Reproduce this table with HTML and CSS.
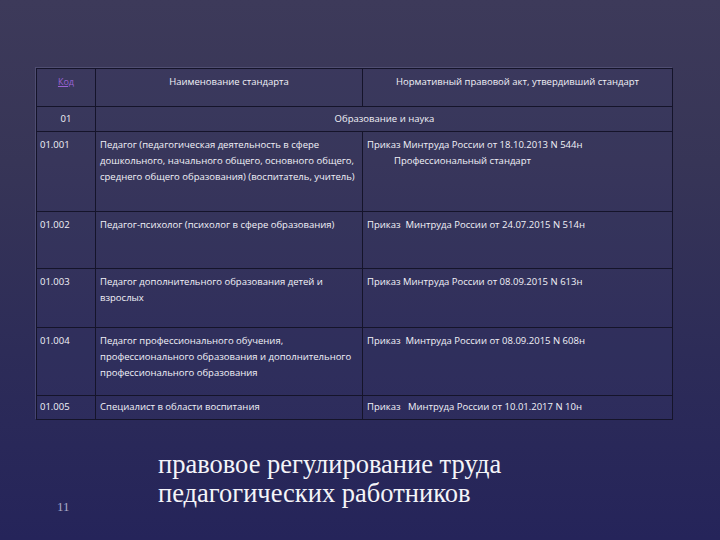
FILE: index.html
```html
<!DOCTYPE html>
<html lang="ru">
<head>
<meta charset="utf-8">
<link rel="stylesheet" href="styles.css">
</head>
<body>
<div class="slide">
  <table class="std">
    <colgroup><col class="c1"><col class="c2"><col class="c3"></colgroup>
    <tr class="r-head">
      <th><a class="code-link" href="#">Код</a></th>
      <th>Наименование стандарта</th>
      <th>Нормативный правовой акт, утвердивший стандарт</th>
    </tr>
    <tr class="r-group">
      <td class="center">01</td>
      <td colspan="2" class="center">Образование и наука</td>
    </tr>
    <tr class="r1">
      <td>01.001</td>
      <td>Педагог (педагогическая деятельность в сфере дошкольного, начального общего, основного общего, среднего общего образования) (воспитатель, учитель)</td>
      <td>Приказ Минтруда России от 18.10.2013 N 544н<br><span class="indent">Профессиональный стандарт</span></td>
    </tr>
    <tr class="r2">
      <td>01.002</td>
      <td>Педагог-психолог (психолог в сфере образования)</td>
      <td>Приказ&nbsp; Минтруда России от 24.07.2015 N 514н</td>
    </tr>
    <tr class="r3">
      <td>01.003</td>
      <td>Педагог дополнительного образования детей и взрослых</td>
      <td>Приказ Минтруда России от 08.09.2015 N 613н</td>
    </tr>
    <tr class="r4">
      <td>01.004</td>
      <td>Педагог профессионального обучения, профессионального образования и дополнительного профессионального образования</td>
      <td>Приказ&nbsp; Минтруда России от 08.09.2015 N 608н</td>
    </tr>
    <tr class="r5">
      <td>01.005</td>
      <td>Специалист в области воспитания</td>
      <td>Приказ&nbsp;&nbsp; Минтруда России от 10.01.2017 N 10н</td>
    </tr>
  </table>
  <div class="footer">
    <div class="pagenum">11</div>
    <h1 class="title">правовое регулирование труда<br>педагогических работников</h1>
  </div>
</div>
</body>
</html>
```
FILE: styles.css
```css
html, body {
  margin: 0;
  padding: 0;
}
body {
  width: 720px;
  height: 540px;
  overflow: hidden;
  background: linear-gradient(180deg, #3d3a5a 0%, #373557 30%, #2d2c58 65%, #25245a 100%);
  font-family: "Open Sans", "Liberation Sans", sans-serif;
  color: #f2f2f8;
}
.slide {
  padding: 68px 0 0 36px;
}
.std {
  border-collapse: collapse;
  width: 636px;
  table-layout: fixed;
  font-size: 9.5px;
  line-height: 16px;
  background: rgba(60, 60, 110, 0.18);
  box-shadow: -1px -1px 0 rgba(120, 120, 160, 0.35);
}
.c1 { width: 59px; }
.c2 { width: 267px; }
.c3 { width: 310px; }
.std th, .std td {
  border: 1px solid #15142a;
  vertical-align: top;
  text-align: left;
  padding: 5px 3px 0 3px;
  font-weight: normal;
}
.std td:nth-child(2), .std td:nth-child(3) {
  padding-left: 4px;
}
.std th {
  text-align: center;
  padding-top: 5px;
}
.r-head { height: 38px; }
.r-group { height: 25px; }
.r-group td { padding-top: 4px; }
.r1 { height: 80px; }
.r2 { height: 57px; }
.r3 { height: 59px; }
.r4 { height: 68px; }
.r5 { height: 24px; }
.r5 td { padding-top: 3px; }
.center { text-align: center !important; }
.code-link {
  color: #9b63d6;
  text-decoration: underline;
  font-size: 9px;
}
.indent {
  padding-left: 27px;
}
.footer {
  display: flex;
  align-items: flex-end;
  margin-top: 30px;
}
.pagenum {
  width: 122px;
  padding-left: 21px;
  box-sizing: border-box;
  font-family: "Liberation Serif", serif;
  font-size: 13px;
  color: #a8a8c8;
  margin-bottom: -7px;
}
.title {
  margin: 0;
  font-family: "Liberation Serif", "DejaVu Serif", serif;
  font-weight: normal;
  font-size: 26.5px;
  line-height: 29px;
  color: #f4f4f8;
}
```
